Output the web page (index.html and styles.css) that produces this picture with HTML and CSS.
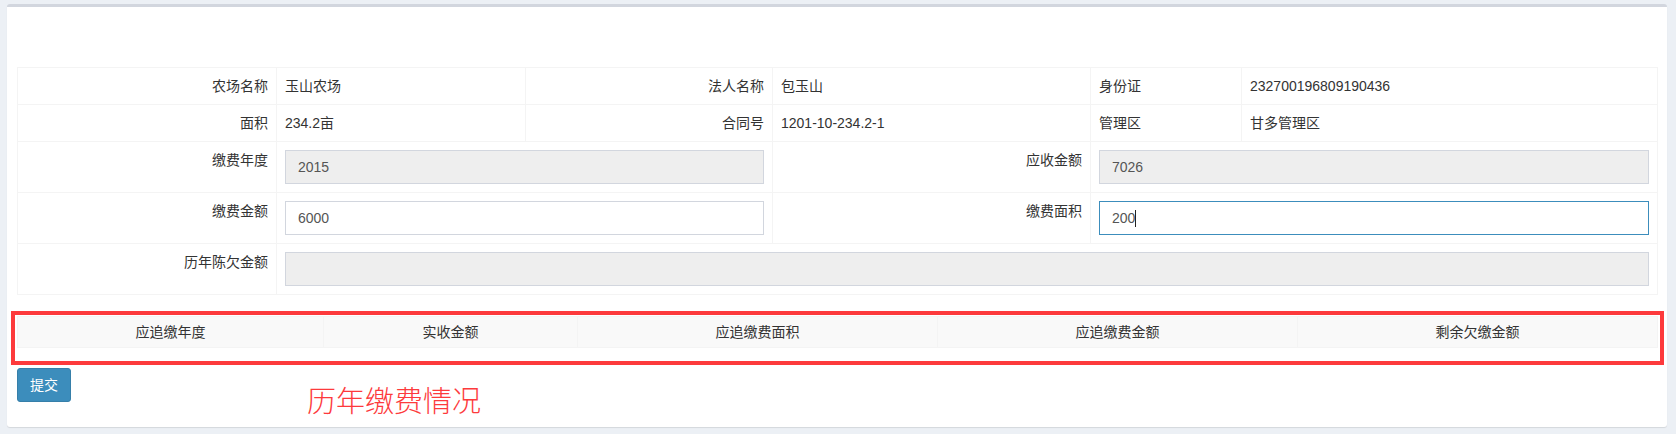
FILE: index.html
```html
<!DOCTYPE html>
<html lang="zh-CN">
<head>
<meta charset="utf-8">
<title>缴费</title>
<link rel="stylesheet" href="styles.css">
</head>
<body>
<div class="page">
  <div class="box">
    <div class="box-header"></div>
    <div class="box-body">
      <table class="info-table">
        <colgroup>
          <col class="c1"><col class="c2"><col class="c3"><col class="c4"><col class="c5"><col class="c6">
        </colgroup>
        <tbody>
          <tr>
            <td class="label">农场名称</td>
            <td>玉山农场</td>
            <td class="label">法人名称</td>
            <td>包玉山</td>
            <td>身份证</td>
            <td>232700196809190436</td>
          </tr>
          <tr>
            <td class="label">面积</td>
            <td>234.2亩</td>
            <td class="label">合同号</td>
            <td>1201-10-234.2-1</td>
            <td>管理区</td>
            <td>甘多管理区</td>
          </tr>
          <tr>
            <td class="label">缴费年度</td>
            <td colspan="2"><input class="form-control" type="text" value="2015" disabled></td>
            <td class="label">应收金额</td>
            <td colspan="2"><input class="form-control" type="text" value="7026" disabled></td>
          </tr>
          <tr>
            <td class="label">缴费金额</td>
            <td colspan="2"><input class="form-control" type="text" value="6000"></td>
            <td class="label">缴费面积</td>
            <td colspan="2">
              <div class="field">
                <input class="form-control focused" type="text" value="200">
                <span class="text-caret"></span>
              </div>
            </td>
          </tr>
          <tr>
            <td class="label">历年陈欠金额</td>
            <td colspan="5"><input class="form-control" type="text" value="" disabled></td>
          </tr>
        </tbody>
      </table>

      <div class="history">
        <table class="history-table">
          <colgroup>
            <col class="h1"><col class="h2"><col class="h3"><col class="h4"><col class="h5">
          </colgroup>
          <thead>
            <tr>
              <th>应追缴年度</th>
              <th>实收金额</th>
              <th>应追缴费面积</th>
              <th>应追缴费金额</th>
              <th>剩余欠缴金额</th>
            </tr>
          </thead>
        </table>
      </div>

      <div class="actions">
        <button class="btn-primary" type="button">提交</button>
        <span class="note">历年缴费情况</span>
      </div>
    </div>
  </div>
</div>
</body>
</html>
```

FILE: styles.css
```css
* {
  box-sizing: border-box;
}

html, body {
  margin: 0;
  padding: 0;
  background: #ecf0f5;
}

body {
  font-family: "Liberation Sans", "Noto Sans CJK SC", sans-serif;
  font-size: 14px;
  line-height: 20px;
  color: #333;
}

.page {
  padding: 4px 9px 8px 7px;
}

.box {
  background: #fff;
  border-top: 3px solid #d2d6de;
  border-radius: 3px;
  box-shadow: 0 1px 1px rgba(0, 0, 0, 0.1);
}

.box-header {
  height: 50px;
}

.box-body {
  padding: 10px 10px 25px 10px;
}

.info-table {
  width: 100%;
  table-layout: fixed;
  border-collapse: collapse;
  border: 1px solid #f4f4f4;
}

.info-table td {
  border: 1px solid #f4f4f4;
  padding: 8px;
  vertical-align: top;
  text-align: left;
  white-space: nowrap;
}

.info-table td.label {
  text-align: right;
}

.c1 { width: 259px; }
.c2 { width: 249px; }
.c3 { width: 247px; }
.c4 { width: 318px; }
.c5 { width: 151px; }
.c6 { width: 416px; }

.form-control {
  display: block;
  width: 100%;
  height: 34px;
  padding: 6px 12px;
  font-family: "Liberation Sans", "Noto Sans CJK SC", sans-serif;
  font-size: 14px;
  line-height: 20px;
  color: #555;
  background: #fff;
  border: 1px solid #d2d6de;
  border-radius: 0;
  outline: none;
  margin: 0;
}

.form-control:disabled {
  background: #eee;
  color: #555;
  opacity: 1;
}

.form-control.focused {
  border-color: #3c8dbc;
}

.field {
  position: relative;
}

.text-caret {
  position: absolute;
  left: 36px;
  top: 9px;
  width: 1px;
  height: 17px;
  background: #222;
}

.history {
  margin: 16px -7px 0 -6px;
  border: 4px solid #fd3a3c;
  padding: 1px 3px 13px 2px;
}

.history-table {
  width: 100%;
  table-layout: fixed;
  border-collapse: collapse;
  border: 1px solid #f4f4f4;
}

.history-table th {
  background: #f9f9f9;
  border: 1px solid #f4f4f4;
  padding: 5px 8px;
  font-weight: normal;
  text-align: center;
  white-space: nowrap;
}

.h1 { width: 306px; }
.h2 { width: 254px; }
.h3 { width: 360px; }
.h4 { width: 360px; }
.h5 { width: 360px; }

.actions {
  display: flex;
  align-items: flex-start;
  height: 34px;
  margin-top: 3px;
}

.btn-primary {
  height: 34px;
  padding: 6px 12px;
  background: #3c8dbc;
  border: 1px solid #367fa9;
  border-radius: 3px;
  color: #fff;
  font-family: "Liberation Sans", "Noto Sans CJK SC", sans-serif;
  font-size: 14px;
  line-height: 20px;
}

.note {
  margin-left: 236px;
  margin-top: 16px;
  font-family: "Noto Sans CJK SC", sans-serif;
  font-size: 29px;
  line-height: 30px;
  font-weight: 300;
  color: #fd3a3c;
  white-space: nowrap;
}
```
